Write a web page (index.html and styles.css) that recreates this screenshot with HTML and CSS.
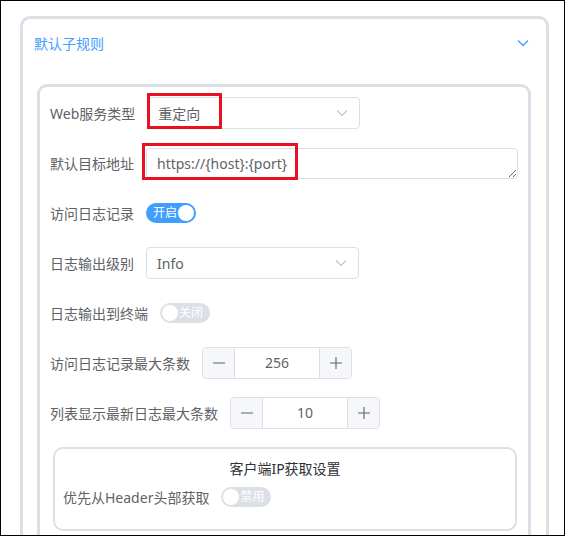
FILE: index.html
```html
<!DOCTYPE html>
<html lang="zh-CN">
<head>
<meta charset="utf-8">
<title>默认子规则</title>
<link rel="stylesheet" href="styles.css">
</head>
<body>
<div class="frame">
  <div class="outer">
    <div class="outer-header">
      <span class="outer-title">默认子规则</span>
      <svg class="header-arrow" width="12" height="8" viewBox="0 0 12 8"><path d="M1 1.5 L6 6.5 L11 1.5" fill="none" stroke="#409eff" stroke-width="1.3"/></svg>
    </div>
    <div class="outer-content">
      <div class="inner">
        <div class="form-item">
          <span class="label">Web服务类型</span>
          <div class="select">
            <span class="select-value">重定向</span>
            <svg class="select-arrow" width="12" height="8" viewBox="0 0 12 8"><path d="M1 1.5 L6 6.5 L11 1.5" fill="none" stroke="#c0c4cc" stroke-width="1.2"/></svg>
          </div>
          <div class="mark mark-type"></div>
        </div>
        <div class="form-item">
          <span class="label">默认目标地址</span>
          <textarea class="textarea" rows="1">https://{host}:{port}</textarea>
          <div class="mark mark-target"></div>
        </div>
        <div class="form-item">
          <span class="label">访问日志记录</span>
          <div class="switch switch-on">
            <span class="switch-text">开启</span>
            <span class="knob"></span>
          </div>
        </div>
        <div class="form-item">
          <span class="label">日志输出级别</span>
          <div class="select">
            <span class="select-value">Info</span>
            <svg class="select-arrow" width="12" height="8" viewBox="0 0 12 8"><path d="M1 1.5 L6 6.5 L11 1.5" fill="none" stroke="#c0c4cc" stroke-width="1.2"/></svg>
          </div>
        </div>
        <div class="form-item">
          <span class="label">日志输出到终端</span>
          <div class="switch switch-off">
            <span class="knob"></span>
            <span class="switch-text">关闭</span>
          </div>
        </div>
        <div class="form-item">
          <span class="label">访问日志记录最大条数</span>
          <div class="number">
            <span class="num-btn num-minus">
              <svg width="12" height="12" viewBox="0 0 12 12"><path d="M0 6 H12" stroke="#606266" stroke-width="1.1"/></svg>
            </span>
            <span class="num-value">256</span>
            <span class="num-btn num-plus">
              <svg width="12" height="12" viewBox="0 0 12 12"><path d="M0 6 H12 M6 0 V12" stroke="#606266" stroke-width="1.1"/></svg>
            </span>
          </div>
        </div>
        <div class="form-item">
          <span class="label">列表显示最新日志最大条数</span>
          <div class="number">
            <span class="num-btn num-minus">
              <svg width="12" height="12" viewBox="0 0 12 12"><path d="M0 6 H12" stroke="#606266" stroke-width="1.1"/></svg>
            </span>
            <span class="num-value">10</span>
            <span class="num-btn num-plus">
              <svg width="12" height="12" viewBox="0 0 12 12"><path d="M0 6 H12 M6 0 V12" stroke="#606266" stroke-width="1.1"/></svg>
            </span>
          </div>
        </div>
        <div class="group">
          <div class="group-title">客户端IP获取设置</div>
          <div class="group-row">
            <span class="label">优先从Header头部获取</span>
            <div class="switch switch-off">
              <span class="knob"></span>
              <span class="switch-text">禁用</span>
            </div>
          </div>
        </div>
      </div>
    </div>
  </div>
</div>
</body>
</html>
```

FILE: styles.css
```css
* { box-sizing: border-box; }
html, body { margin: 0; padding: 0; background: #fff; }
body {
  font-family: "Noto Sans", "Noto Sans CJK SC", sans-serif;
  font-size: 14px;
  color: #606266;
}
.frame {
  width: 565px;
  height: 536px;
  border: 1px solid #000;
  overflow: hidden;
  background: #fff;
  padding: 15px 0 0 19px;
}
.outer {
  width: 529px;
  border: 3px solid #dcdfe6;
  border-radius: 10px;
  height: 600px;
}
.outer-header {
  height: 48px;
  display: flex;
  align-items: center;
  justify-content: space-between;
  padding: 0 17px 0 11px;
}
.outer-title {
  color: #409eff;
  font-size: 14px;
}
.header-arrow { display: block; }
.outer-content {
  padding: 17px 15px 0 14px;
}
.inner {
  border: 3px solid #dcdfe6;
  border-radius: 10px;
  padding: 10px 8px 0 10px;
  height: 500px;
}
.form-item {
  position: relative;
  display: flex;
  align-items: center;
  height: 32px;
  margin-bottom: 18px;
}
.label {
  padding-right: 12px;
  white-space: nowrap;
  color: #606266;
  font-size: 14px;
}
.select {
  width: 213px;
  height: 32px;
  border: 1px solid #dcdfe6;
  border-radius: 4px;
  display: flex;
  align-items: center;
  justify-content: space-between;
  padding: 0 11px 0 10px;
  background: #fff;
}
.select-value { color: #606266; }
.select-arrow { display: block; }
.textarea {
  width: 372px;
  height: 31px;
  border: 1px solid #dcdfe6;
  border-radius: 4px;
  font: inherit;
  font-size: 14px;
  color: #606266;
  padding: 4px 10px;
  line-height: 21px;
  resize: vertical;
  overflow: hidden;
  outline: none;
}
.mark {
  position: absolute;
  border: 3px solid #e81123;
  pointer-events: none;
}
.mark-type { left: 97px; top: -4px; width: 75px; height: 36px; }
.mark-target { left: 92px; top: -4px; width: 156px; height: 37px; }
.switch {
  width: 50px;
  height: 20px;
  border-radius: 10px;
  display: flex;
  align-items: center;
  justify-content: space-between;
  padding: 0 2px;
}
.switch-on { background: #409eff; padding-left: 7px; }
.switch-off { background: #dcdfe6; padding-right: 7px; }
.switch-text {
  color: #fff;
  font-size: 12px;
  line-height: 20px;
}
.knob {
  width: 16px;
  height: 16px;
  border-radius: 50%;
  background: #fff;
}
.number {
  width: 150px;
  height: 32px;
  border: 1px solid #dcdfe6;
  border-radius: 4px;
  display: flex;
  overflow: hidden;
}
.num-btn {
  width: 32px;
  flex: none;
  background: #f5f7fa;
  display: flex;
  align-items: center;
  justify-content: center;
}
.num-btn svg { display: block; }
.num-minus { border-right: 1px solid #dcdfe6; }
.num-plus { border-left: 1px solid #dcdfe6; }
.num-value {
  flex: 1;
  text-align: center;
  line-height: 30px;
  color: #606266;
}
.group {
  margin-left: 3px;
  width: 464px;
  border: 2px solid #dcdfe6;
  border-radius: 10px;
  padding: 10px 8px 16px 8px;
}
.group-title {
  text-align: center;
  color: #303133;
  line-height: 20px;
  height: 20px;
  margin-bottom: 2px;
}
.group-row {
  display: flex;
  align-items: center;
  height: 32px;
}
```
